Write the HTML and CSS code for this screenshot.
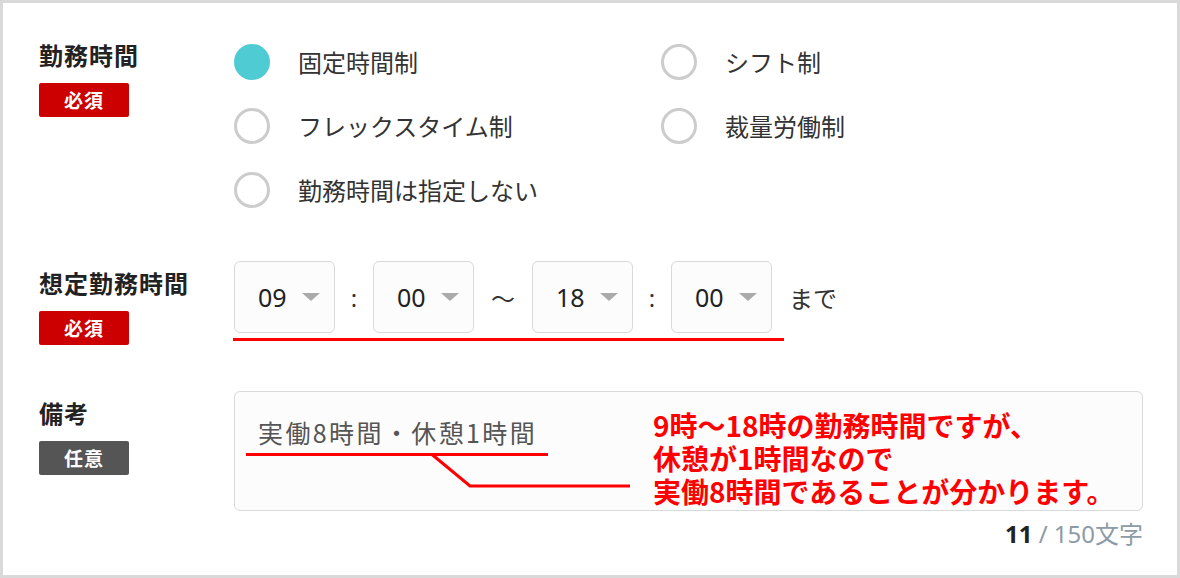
FILE: index.html
```html
<!DOCTYPE html>
<html lang="ja">
<head>
<meta charset="utf-8">
<link rel="stylesheet" href="styles.css">
</head>
<body>
<div class="frame">
  <section class="row row-work">
    <div class="head">
      <div class="label">勤務時間</div>
      <div class="badge req">必須</div>
    </div>
    <div class="radios">
      <div class="radio"><span class="dot on"></span><span class="rtext">固定時間制</span></div>
      <div class="radio"><span class="dot"></span><span class="rtext">シフト制</span></div>
      <div class="radio"><span class="dot"></span><span class="rtext">フレックスタイム制</span></div>
      <div class="radio"><span class="dot"></span><span class="rtext">裁量労働制</span></div>
      <div class="radio"><span class="dot"></span><span class="rtext">勤務時間は指定しない</span></div>
    </div>
  </section>

  <section class="row row-time">
    <div class="head pad">
      <div class="label">想定勤務時間</div>
      <div class="badge req">必須</div>
    </div>
    <div class="timebox">
      <div class="selects">
        <div class="sel"><span class="val">09</span><span class="caret"></span></div>
        <span class="sep colon">:</span>
        <div class="sel"><span class="val">00</span><span class="caret"></span></div>
        <span class="sep tilde">〜</span>
        <div class="sel"><span class="val">18</span><span class="caret"></span></div>
        <span class="sep colon">:</span>
        <div class="sel"><span class="val">00</span><span class="caret"></span></div>
        <span class="made">まで</span>
      </div>
      <div class="redline"></div>
    </div>
  </section>

  <section class="row row-note">
    <div class="head pad">
      <div class="label">備考</div>
      <div class="badge opt">任意</div>
    </div>
    <div class="notebox">
      <div class="area">
        <div class="areatext">実働8時間・休憩1時間</div>
        <svg class="lines" width="909" height="120" viewBox="0 0 909 120">
          <path d="M12 63.5 H314 M198 63.5 L236 95 H396" fill="none" stroke="#ff0000" stroke-width="3"/>
        </svg>
        <div class="callout">
          <div class="cline">9時〜18時の勤務時間ですが、</div>
          <div class="cline">休憩が1時間なので</div>
          <div class="cline">実働8時間であることが分かります。</div>
        </div>
      </div>
      <div class="count"><b>11</b> / 150文字</div>
    </div>
  </section>
</div>
</body>
</html>
```

FILE: styles.css
```css
* { box-sizing: border-box; }
html, body { margin: 0; padding: 0; background: #fff; }
body { font-family: "Noto Sans CJK JP", "Noto Sans", sans-serif; color: #333; }

.frame {
  width: 1180px;
  height: 578px;
  border: 3px solid #d9d9d9;
  padding: 38px 0 0 36px;
  overflow: hidden;
}

.row { display: flex; align-items: flex-start; }
.row-time { margin-top: 53px; }
.row-note { margin-top: 46px; }

.head { width: 195px; flex: none; }
.head.pad { padding-top: 8px; }
.label {
  font-size: 24px;
  font-weight: 700;
  line-height: 28px;
  letter-spacing: 1px;
  color: #222;
  white-space: nowrap;
}
.badge {
  margin-top: 14px;
  width: 90px;
  height: 34px;
  border-radius: 2px;
  color: #fff;
  font-size: 19px;
  font-weight: 700;
  line-height: 34px;
  letter-spacing: 1px;
  text-align: center;
}
.badge.req { background: #cc0000; }
.badge.opt { background: #555555; }

.radios {
  margin-top: 3px;
  display: grid;
  grid-template-columns: 427px auto;
  row-gap: 28px;
}
.radio { display: flex; align-items: center; gap: 28px; height: 36px; }
.dot {
  width: 36px; height: 36px;
  border-radius: 50%;
  border: 3px solid #cccccc;
  background: #fff;
  flex: none;
}
.dot.on { background: #4fcbd4; border-color: #4fcbd4; }
.rtext { font-size: 24px; line-height: 36px; color: #333; white-space: nowrap; }

.selects { display: flex; align-items: center; }
.sel {
  width: 101px;
  height: 72px;
  border: 1px solid #d9d9d9;
  border-radius: 6px;
  background: #fcfcfc;
  display: flex;
  align-items: center;
  justify-content: space-between;
  padding: 0 14px 0 23px;
}
.val { font-family: "Noto Sans", "Noto Sans CJK JP", sans-serif; font-size: 25px; color: #222; line-height: 1; }
.caret {
  width: 0; height: 0;
  border-left: 9px solid transparent;
  border-right: 9px solid transparent;
  border-top: 8px solid #aaaaaa;
}
.sep { text-align: center; font-size: 24px; color: #333; }
.colon { width: 38px; font-family: "Noto Sans", sans-serif; }
.tilde { width: 58px; }
.made { margin-left: 17px; font-size: 24px; color: #333; }
.redline { margin-top: 5px; margin-left: -1px; width: 551px; height: 3px; background: #ff0000; }

.notebox { width: 909px; }
.area {
  position: relative;
  height: 120px;
  border: 1px solid #d9d9d9;
  border-radius: 6px;
  background: #fcfcfc;
  padding: 23px 23px;
}
.areatext { font-size: 25px; line-height: 34px; letter-spacing: 2.4px; color: #555; }
.lines { position: absolute; left: -1px; top: -1px; }
.callout {
  position: absolute;
  left: 418px;
  top: 17px;
  font-size: 28px;
  font-weight: 700;
  color: #ff0000;
  white-space: nowrap;
}
.cline { height: 33px; line-height: 33px; }
.count {
  margin-top: 7px;
  text-align: right;
  font-family: "Noto Sans", "Noto Sans CJK JP", sans-serif;
  font-size: 24px;
  line-height: 32px;
  color: #8c9ba5;
}
.count b { color: #222; font-weight: 700; }
```
